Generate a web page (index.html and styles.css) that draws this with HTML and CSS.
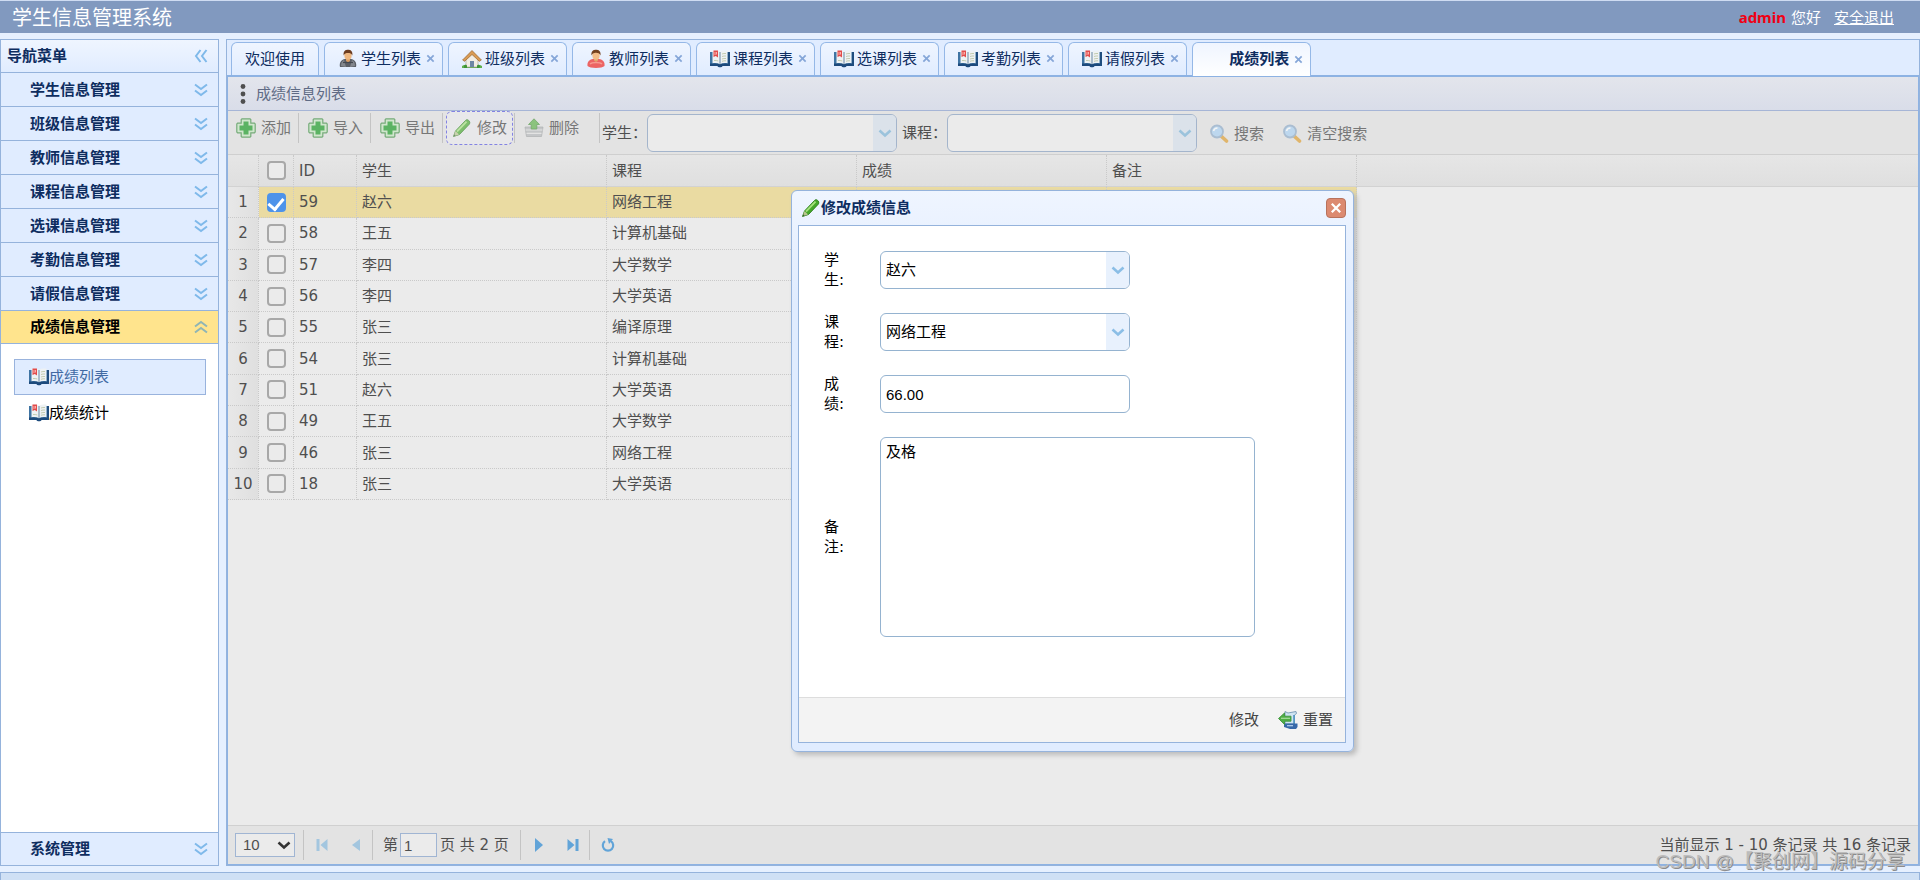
FILE: index.html
```html
<!DOCTYPE html>
<html lang="zh-CN">
<head>
<meta charset="utf-8">
<title>学生信息管理系统</title>
<link rel="stylesheet" href="styles.css">
</head>
<body>
<svg class="sprite" aria-hidden="true">
  <symbol id="i-book" viewBox="0 0 20 20">
    <path d="M0 3h20v13.500h-7.500c-.3 2-4.700 2-5 0H0z" fill="#3f74a3"/>
    <path d="M0 14.500h20v2.500h-7.500c-.3 1.800-4.700 1.800-5 0H0z" fill="#1d4a7c"/>
    <path d="M18 3h2v14h-2z" fill="#1f4d7e"/>
    <path d="M2.500 1.800c3-.6 5.500-.2 7.500 1 2-1.200 4.500-1.600 7.500-1v12.400c-3-.6-5.500-.2-7.500 1-2-1.200-4.500-1.600-7.500-1z" fill="#eef2f4"/>
    <path d="M10 3v12" stroke="#8fa6bb" stroke-width="1.400"/>
    <path d="M12 5c1.300-.5 2.500-.6 4-.5M12 7.500c1.300-.5 2.500-.6 4-.5M12 10c1.300-.5 2.500-.6 4-.5M12 12.300c1.300-.5 2.500-.6 4-.5M4 11.500c1.500-.1 3 0 4.300.5" stroke="#c3ccb0" stroke-width="1" fill="none"/>
    <path d="M3.500 1.500h4.500v7L5.800 7 3.500 8z" fill="#e24b4b"/>
    <path d="M5 3v3M6.500 3v2.500" stroke="#ffc9c4" stroke-width=".8"/>
  </symbol>
  <symbol id="i-student" viewBox="0 0 20 20">
    <path d="M2 18c-1-4 1-7.500 5-8h6c4 .5 6 4 5 8z" fill="#5b5f66"/>
    <path d="M3 17c0-3 1-5 3-6l2 7zM17 17c0-3-1-5-3-6l-2 7z" fill="#83878d"/>
    <path d="M8 9.500h4v2.500l-2 1.500-2-1.500z" fill="#d89a60"/>
    <ellipse cx="10" cy="6.500" rx="3.600" ry="4.300" fill="#eeb780"/>
    <path d="M5.700 6.500C5 2 7.500.8 10 .8s5 1.200 4.300 5.700C13.500 4.500 12 4 10 4s-3.500.5-4.300 2.500z" fill="#6c3d20"/>
    <path d="M5 13.500h10" stroke="#45494f" stroke-width="1.200"/>
  </symbol>
  <symbol id="i-teacher" viewBox="0 0 20 20">
    <path d="M1.500 17c-.5-4 1.500-6.500 5.500-7h6c4 .5 6 3 5.500 7-2 2.500-15 2.500-17 0z" fill="#ec6464"/>
    <path d="M4 15c2-2 10-2 12 0" stroke="#f69a90" stroke-width="1.400" fill="none"/>
    <path d="M8 9.500h4v2l-2 1.500-2-1.500z" fill="#e2a36b"/>
    <ellipse cx="10" cy="6.500" rx="3.600" ry="4.300" fill="#f3bd88"/>
    <path d="M5.500 6.500C4.800 2 7.500.8 10 .8s5.200 1.200 4.500 5.700C13.500 4 11 3.600 8.500 4 7 4.200 6.300 5 5.500 6.500z" fill="#74421f"/>
  </symbol>
  <symbol id="i-house" viewBox="0 0 20 20">
    <path d="M0 17c2-2.500 18-2.500 20 0v2H0z" fill="#5faf4c"/>
    <path d="M4 9l6-6 6 6v9H4z" fill="#f1ede4" stroke="#a9a08f" stroke-width=".6"/>
    <path d="M.6 11L10 1.500 19.400 11l-2 1.300L10 5.500l-7.400 6.800z" fill="#d99b55" stroke="#9a6428" stroke-width=".7"/>
    <path d="M8 18v-6h4v6z" fill="#6d86a5"/>
    <path d="M2 18c0-2.500 2-3 3-1.500V19H2zM15 16.500c1.500-1.500 3-.5 3 1.500l-1 1h-2z" fill="#3f9438"/>
  </symbol>
  <symbol id="i-add" viewBox="0 0 20 20">
    <path d="M6 .8h8l.8.8V5.200h3.600l.8.800v8l-.8.800h-3.600v3.600l-.8.800H6l-.8-.8v-3.600H1.600l-.8-.8V6l.8-.8h3.600V1.600z" fill="#c6e8c2" stroke="#3d8f42" stroke-width="1.200"/>
    <path d="M7.500 3.500h5v4h4v5h-4v4h-5v-4h-4v-5h4z" fill="#149a20"/>
  </symbol>
  <symbol id="i-pencil" viewBox="0 0 20 20">
    <path d="M1.500 18.500L3.500 13 13.500 2.500c1.500-2.400 5.800 1 3.800 3.700L7.500 16.500z" fill="#45a82a" stroke="#287d1a" stroke-width=".9"/>
    <path d="M5 13.500L14.500 3.700" stroke="#a5e07c" stroke-width="1.800"/>
    <path d="M1.500 18.500L3.500 13 7 16.500z" fill="#b9c58f"/>
    <path d="M1.500 18.500l.8-2.300 1.500 1.400z" fill="#345f2d"/>
  </symbol>
  <symbol id="i-remove" viewBox="0 0 20 20">
    <path d="M1 9h18l-1.500 9.500h-15z" fill="#b5b8ba" stroke="#94989a" stroke-width=".7"/>
    <path d="M1.500 12h17M2.500 15.300h15" stroke="#e4e4e4" stroke-width="1.200"/>
    <path d="M10 .8l5.500 5.700h-2.700V11H7.200V6.500H4.500z" fill="#5db347" stroke="#3d8b30" stroke-width=".8"/>
  </symbol>
  <symbol id="i-search" viewBox="0 0 20 20">
    <path d="M12 12l5.500 5" stroke="#df9d2c" stroke-width="3.600" stroke-linecap="round"/>
    <circle cx="8" cy="7.500" r="6" fill="#a9d2f5" stroke="#8caac8" stroke-width="1.800"/>
    <path d="M4.500 7c.5-2 2-3 4-3" stroke="#fff" stroke-width="1.500" fill="none"/>
  </symbol>
  <symbol id="i-reset" viewBox="0 0 20 20">
    <path d="M7 1.500l3 1.500 8-1.500.5 2-2 1.500v9H7z" fill="#cfe4f2" stroke="#7396b3" stroke-width=".9"/>
    <path d="M16 5v9" stroke="#4d94c4" stroke-width="1.600"/>
    <path d="M6 13.500h13.500V17L18 19H12L6 17z" fill="#3768a8"/>
    <path d="M9 15.700h6" stroke="#b7d2ee" stroke-width="1.200"/>
    <path d="M.5 8.500L6.500 3v3.200H13v5H6.500v3.300z" fill="#4fae45" stroke="#3f9440" stroke-width=".9"/>
    <path d="M3 8.300h9" stroke="#a9dca0" stroke-width="1.200"/>
  </symbol>
  <symbol id="i-down2" viewBox="0 0 14 14"><path d="M1 1.500l6 4.500 6-4.500M1 7.500L7 12l6-4.500" fill="none" stroke="currentColor" stroke-width="2"/></symbol>
  <symbol id="i-up2" viewBox="0 0 14 14"><path d="M1 6.500L7 2l6 4.500M1 12.500L7 8l6 4.500" fill="none" stroke="currentColor" stroke-width="2"/></symbol>
  <symbol id="i-left2" viewBox="0 0 14 14"><path d="M6.500 1L2 7l4.500 6M12.500 1L8 7l4.500 6" fill="none" stroke="currentColor" stroke-width="2"/></symbol>
  <symbol id="i-chev" viewBox="0 0 14 14"><path d="M1.500 4.500L7 9.500l5.500-5" fill="none" stroke="currentColor" stroke-width="2.600"/></symbol>
  <symbol id="i-x" viewBox="0 0 10 10"><path d="M1.500 1.500l7 7M8.500 1.500l-7 7" fill="none" stroke="currentColor" stroke-width="1.900"/></symbol>
  <symbol id="i-dots" viewBox="0 0 6 20"><g fill="#4f4f4f"><circle cx="3" cy="2.500" r="2.400"/><circle cx="3" cy="10" r="2.400"/><circle cx="3" cy="17.500" r="2.400"/></g></symbol>
  <symbol id="i-first" viewBox="0 0 14 14"><path d="M1.500 1h3v12h-3zM12.500 1v12l-7-6z" fill="currentColor"/></symbol>
  <symbol id="i-prev" viewBox="0 0 14 14"><path d="M11 1v12L3 7z" fill="currentColor"/></symbol>
  <symbol id="i-next" viewBox="0 0 14 14"><path d="M3 0v14l8-7z" fill="currentColor"/></symbol>
  <symbol id="i-last" viewBox="0 0 14 14"><path d="M9.500 1h3v12h-3zM1.500 1v12l7-6z" fill="currentColor"/></symbol>
  <symbol id="i-refresh" viewBox="0 0 14 14"><path d="M4 3.200a5.200 5.200 0 1 0 6 0" fill="none" stroke="currentColor" stroke-width="2.200"/><path d="M6.500 0L12 1 8 6z" fill="currentColor"/></symbol>
</svg>

<header class="topbar">
  <h1 class="brand">学生信息管理系统</h1>
  <div class="user"><strong class="user-name">admin</strong><span>您好</span><a class="logout" href="#">安全退出</a></div>
</header>

<div class="workspace">
  <nav class="sidebar" aria-label="导航菜单">
    <div class="side-title"><span>导航菜单</span><button class="side-toggle" aria-label="收起"><svg><use href="#i-left2"/></svg></button></div>
    <button class="side-item"><span>学生信息管理</span><svg><use href="#i-down2"/></svg></button>
    <button class="side-item"><span>班级信息管理</span><svg><use href="#i-down2"/></svg></button>
    <button class="side-item"><span>教师信息管理</span><svg><use href="#i-down2"/></svg></button>
    <button class="side-item"><span>课程信息管理</span><svg><use href="#i-down2"/></svg></button>
    <button class="side-item"><span>选课信息管理</span><svg><use href="#i-down2"/></svg></button>
    <button class="side-item"><span>考勤信息管理</span><svg><use href="#i-down2"/></svg></button>
    <button class="side-item"><span>请假信息管理</span><svg><use href="#i-down2"/></svg></button>
    <button class="side-item side-item-open"><span>成绩信息管理</span><svg><use href="#i-up2"/></svg></button>
    <div class="side-panel">
      <a class="side-link side-link-on" href="#"><svg><use href="#i-book"/></svg>成绩列表</a>
      <a class="side-link" href="#"><svg><use href="#i-book"/></svg>成绩统计</a>
    </div>
    <button class="side-item side-item-last"><span>系统管理</span><svg><use href="#i-down2"/></svg></button>
  </nav>

  <main class="main">
    <ul class="tabs">
      <li class="tab tab-home"><a href="#">欢迎使用</a></li>
      <li class="tab"><a href="#"><svg><use href="#i-student"/></svg>学生列表</a><button class="tab-close" aria-label="关闭"><svg><use href="#i-x"/></svg></button></li>
      <li class="tab"><a href="#"><svg><use href="#i-house"/></svg>班级列表</a><button class="tab-close" aria-label="关闭"><svg><use href="#i-x"/></svg></button></li>
      <li class="tab"><a href="#"><svg><use href="#i-teacher"/></svg>教师列表</a><button class="tab-close" aria-label="关闭"><svg><use href="#i-x"/></svg></button></li>
      <li class="tab"><a href="#"><svg><use href="#i-book"/></svg>课程列表</a><button class="tab-close" aria-label="关闭"><svg><use href="#i-x"/></svg></button></li>
      <li class="tab"><a href="#"><svg><use href="#i-book"/></svg>选课列表</a><button class="tab-close" aria-label="关闭"><svg><use href="#i-x"/></svg></button></li>
      <li class="tab"><a href="#"><svg><use href="#i-book"/></svg>考勤列表</a><button class="tab-close" aria-label="关闭"><svg><use href="#i-x"/></svg></button></li>
      <li class="tab"><a href="#"><svg><use href="#i-book"/></svg>请假列表</a><button class="tab-close" aria-label="关闭"><svg><use href="#i-x"/></svg></button></li>
      <li class="tab tab-on"><a href="#"><svg></svg>成绩列表</a><button class="tab-close" aria-label="关闭"><svg><use href="#i-x"/></svg></button></li>
    </ul>

    <section class="panel">
      <h2 class="panel-title"><svg><use href="#i-dots"/></svg>成绩信息列表</h2>
      <div class="toolbar">
        <div class="tools">
          <button class="tool"><svg><use href="#i-add"/></svg>添加</button><i class="sep"></i>
          <button class="tool"><svg><use href="#i-add"/></svg>导入</button><i class="sep"></i>
          <button class="tool"><svg><use href="#i-add"/></svg>导出</button><i class="sep"></i>
          <button class="tool tool-focus"><svg><use href="#i-pencil"/></svg>修改</button><i class="sep"></i>
          <button class="tool"><svg><use href="#i-remove"/></svg>删除</button><i class="sep sep-far"></i>
        </div>
        <div class="filters">
          <label for="f-student">学生：</label>
          <span class="combo"><select id="f-student"><option></option></select><span class="combo-arrow"><svg><use href="#i-chev"/></svg></span></span>
          <label class="second" for="f-course">课程：</label>
          <span class="combo"><select id="f-course"><option></option></select><span class="combo-arrow"><svg><use href="#i-chev"/></svg></span></span>
          <button class="tool find"><svg><use href="#i-search"/></svg>搜索</button>
          <button class="tool find"><svg><use href="#i-search"/></svg>清空搜索</button>
        </div>
      </div>

      <div class="grid-area">
        <table class="grid">
          <colgroup><col class="c-num"><col class="c-check"><col class="c-id"><col class="c-wide"><col class="c-wide"><col class="c-wide"><col class="c-wide"><col></colgroup>
          <thead>
            <tr><th></th><th class="check"><input type="checkbox" aria-label="全选"></th><th>ID</th><th>学生</th><th>课程</th><th>成绩</th><th>备注</th><th></th></tr>
          </thead>
          <tbody>
            <tr class="row-on"><td class="num">1</td><td class="check"><input type="checkbox" checked aria-label="选择 59"></td><td>59</td><td>赵六</td><td>网络工程</td><td></td><td></td><td class="rest"></td></tr>
            <tr><td class="num">2</td><td class="check"><input type="checkbox" aria-label="选择 58"></td><td>58</td><td>王五</td><td>计算机基础</td><td></td><td></td><td class="rest"></td></tr>
            <tr><td class="num">3</td><td class="check"><input type="checkbox" aria-label="选择 57"></td><td>57</td><td>李四</td><td>大学数学</td><td></td><td></td><td class="rest"></td></tr>
            <tr><td class="num">4</td><td class="check"><input type="checkbox" aria-label="选择 56"></td><td>56</td><td>李四</td><td>大学英语</td><td></td><td></td><td class="rest"></td></tr>
            <tr><td class="num">5</td><td class="check"><input type="checkbox" aria-label="选择 55"></td><td>55</td><td>张三</td><td>编译原理</td><td></td><td></td><td class="rest"></td></tr>
            <tr><td class="num">6</td><td class="check"><input type="checkbox" aria-label="选择 54"></td><td>54</td><td>张三</td><td>计算机基础</td><td></td><td></td><td class="rest"></td></tr>
            <tr><td class="num">7</td><td class="check"><input type="checkbox" aria-label="选择 51"></td><td>51</td><td>赵六</td><td>大学英语</td><td></td><td></td><td class="rest"></td></tr>
            <tr><td class="num">8</td><td class="check"><input type="checkbox" aria-label="选择 49"></td><td>49</td><td>王五</td><td>大学数学</td><td></td><td></td><td class="rest"></td></tr>
            <tr><td class="num">9</td><td class="check"><input type="checkbox" aria-label="选择 46"></td><td>46</td><td>张三</td><td>网络工程</td><td></td><td></td><td class="rest"></td></tr>
            <tr><td class="num">10</td><td class="check"><input type="checkbox" aria-label="选择 18"></td><td>18</td><td>张三</td><td>大学英语</td><td></td><td></td><td class="rest"></td></tr>
          </tbody>
        </table>
      </div>

      <footer class="pager">
        <span class="page-size"><select aria-label="每页条数"><option>10</option></select><svg><use href="#i-chev"/></svg></span>
        <i class="sep"></i>
        <button class="page-btn faded" aria-label="第一页"><svg><use href="#i-first"/></svg></button>
        <button class="page-btn faded" aria-label="上一页"><svg><use href="#i-prev"/></svg></button>
        <i class="sep"></i>
        <label class="page-label" for="page-no">第</label><input class="page-no" id="page-no" value="1"><span class="page-count">页 共 2 页</span>
        <i class="sep"></i>
        <button class="page-btn" aria-label="下一页"><svg><use href="#i-next"/></svg></button>
        <button class="page-btn" aria-label="最后一页"><svg><use href="#i-last"/></svg></button>
        <i class="sep"></i>
        <button class="page-btn" aria-label="刷新"><svg><use href="#i-refresh"/></svg></button>
        <span class="page-info">当前显示 1 - 10 条记录 共 16 条记录</span>
      </footer>
    </section>
  </main>
</div>
<div class="bottombar"></div>

<form class="dialog" role="dialog" aria-labelledby="dlg-title">
  <div class="dialog-head">
    <svg><use href="#i-pencil"/></svg><h2 id="dlg-title">修改成绩信息</h2>
    <button type="button" class="dialog-close" aria-label="关闭"><svg><use href="#i-x"/></svg></button>
  </div>
  <div class="dialog-body">
    <div class="fields">
      <label for="d-student">学生:</label>
      <span class="combo"><select id="d-student"><option>赵六</option></select><span class="combo-arrow"><svg><use href="#i-chev"/></svg></span></span>
      <label for="d-course">课程:</label>
      <span class="combo"><select id="d-course"><option>网络工程</option></select><span class="combo-arrow"><svg><use href="#i-chev"/></svg></span></span>
      <label for="d-score">成绩:</label>
      <input class="text" id="d-score" value="66.00">
      <label for="d-remark">备注:</label>
      <textarea class="text remark" id="d-remark">及格</textarea>
    </div>
    <div class="dialog-buttons">
      <button type="button" class="tool">修改</button>
      <button type="button" class="tool"><svg><use href="#i-reset"/></svg>重置</button>
    </div>
  </div>
</form>
<div class="watermark">CSDN @【聚创网】源码分享</div>
</body>
</html>
```

FILE: styles.css
```css
* { box-sizing: border-box; }

body {
  margin: 0;
  min-height: 100vh;
  display: flex;
  flex-direction: column;
  position: relative;
  background: #e6f0ff;
  color: #000;
  font: 15px/20px "DejaVu Sans", "Noto Sans CJK SC", sans-serif;
}

button, select, input, textarea { font: inherit; color: inherit; margin: 0; }
button { border: 0; padding: 0; background: none; }
h1, h2, ul { margin: 0; padding: 0; font-size: inherit; }
svg { flex: none; display: block; width: 20px; height: 20px; }
.sprite { display: none; }
a { color: inherit; text-decoration: none; }

/* top bar */
.topbar {
  display: flex;
  align-items: center;
  justify-content: space-between;
  height: 33px;
  padding: 0 26px 0 12px;
  border-top: 1px solid #cfdcf2;
  background: #8199bf;
  color: #fff;
}
.brand { font: 20px/28px "Noto Sans CJK SC", sans-serif; }
.user { display: flex; font-family: "Noto Sans", "Noto Sans CJK SC", sans-serif; }
.user-name { color: #f00014; margin-right: 5px; }
.logout { margin-left: 13px; text-decoration: underline; }

.workspace { flex: 1; display: flex; gap: 7px; padding: 6px 0; }

/* sidebar */
.sidebar {
  flex: none;
  width: 219px;
  display: flex;
  flex-direction: column;
  border: 1px solid #95b3dc;
  background: #fff;
  color: #0e2d5f;
  font-weight: bold;
}
.side-title, .side-item {
  display: flex;
  align-items: center;
  justify-content: space-between;
  height: 34px;
  padding: 0 10px 0 29px;
  border-bottom: 1px solid #95b3dc;
  background: #e0ecff;
  text-align: left;
}
.side-title { height: 33px; padding-left: 6px; background: linear-gradient(#eff5ff, #e0ecff); }
.side-title svg, .side-item svg { width: 14px; height: 14px; color: #7fb9ea; }
.side-item-open { height: 33px; background: #ffe48d; color: #000; }
.side-item-open svg { color: #8fb5b5; }
.side-item-last { height: 33px; border-top: 1px solid #95b3dc; border-bottom: 0; }
.side-panel { flex: 1; padding: 15px 12px 0 13px; font-weight: normal; }
.side-link {
  display: flex;
  align-items: center;
  height: 36px;
  padding-left: 14px;
  border: 1px solid transparent;
  color: #000;
}
.side-link-on { border-color: #99b3dd; background: #e0ecff; color: #416aa3; }

/* main area and tabs */
.main {
  flex: 1;
  min-width: 0;
  display: flex;
  flex-direction: column;
  border: 1px solid #95b3dc;
  background: #e0ecff;
}
.tabs {
  display: flex;
  gap: 5px;
  padding: 2px 4px 0;
  border-bottom: 1px solid #8db2e3;
  list-style: none;
  color: #0e2d5f;
}
.tab {
  display: flex;
  align-items: center;
  gap: 5px;
  height: 33px;
  padding: 5px 7px 6px 13px;
  border: 1px solid #95b8e7;
  border-bottom: 0;
  border-radius: 6px 6px 0 0;
  background: linear-gradient(#eff5ff, #e0ecff);
}
.tab a { display: flex; align-items: center; gap: 3px; }
.tab-home { padding: 5px 13px 6px; }
.tab-on { margin-bottom: -1px; height: 34px; background: linear-gradient(#eff5ff, #fff); font-weight: bold; }
.tab-close svg { width: 9px; height: 9px; color: #85a6d8; }

.panel {
  flex: 1;
  display: flex;
  flex-direction: column;
  border: 1px solid #8db2e3;
  background: #ebebeb;
  color: #4f4f4f;
}
.panel-title {
  display: flex;
  align-items: center;
  gap: 10px;
  height: 34px;
  padding: 0 12px;
  border-bottom: 1px solid #a6b5d6;
  background: linear-gradient(#e3e5ec, #d9dde9);
  color: #5f6b85;
  font-weight: normal;
}
.panel-title svg { width: 6px; }

.toolbar { display: flex; align-items: flex-start; height: 44px; border-bottom: 1px solid #cfcfcf; background: #e3e3e3; }
.tools { display: flex; align-items: center; height: 34px; padding-left: 2px; }
.tool {
  display: flex;
  align-items: center;
  gap: 5px;
  height: 34px;
  padding: 0 5px;
  border: 1px solid transparent;
  border-radius: 6px;
  color: #777;
}
.tool svg { opacity: .65; }
.tools .tool { margin-right: 1px; }
.tools .sep { margin-right: 3px; }
.tools .sep-far { margin-left: 13px; margin-right: 2px; }
.tools .tool-focus { border: 1px dashed #8383e2; background: #e8e8ea; }
.sep { width: 1px; height: 30px; background: #c4c4c4; }
.filters { display: flex; align-items: center; height: 44px; }
.second { margin-left: 5px; }
.find { margin: 2px 0 0 6px; }

/* drop-down: the arrow cell shares the select's grid cell */
.combo { display: inline-grid; width: 250px; height: 38px; }
.combo select, .combo-arrow { grid-area: 1 / 1; }
.combo select {
  appearance: none;
  width: 100%;
  padding: 0 5px;
  border: 1px solid #95b3d0;
  border-radius: 6px;
  background: #fff;
  font-family: "Liberation Sans", "Noto Sans CJK SC", sans-serif;
}
.combo-arrow {
  justify-self: end;
  display: flex;
  align-items: center;
  justify-content: center;
  width: 23px;
  margin: 1px;
  border-radius: 0 5px 5px 0;
  background: #e8f1fd;
  color: #8bbee6;
  pointer-events: none;
}
.combo-arrow svg { width: 14px; height: 14px; }
.filters .combo select { background: #ebebeb; border-color: #a4b5cc; }
.filters .combo-arrow { background: #dbe2ea; color: #9bc3dc; }

/* data grid */
.grid-area { flex: 1; }
.grid { width: 100%; height: 345px; table-layout: fixed; border-collapse: separate; border-spacing: 0; }
.c-num { width: 31px; }
.c-check { width: 35px; }
.c-id { width: 63px; }
.c-wide { width: 250px; }
.grid th, .grid td {
  height: 31px;
  padding: 0 5px;
  border-right: 1px dotted #c9c9c9;
  border-bottom: 1px dotted #c9c9c9;
  text-align: left;
  font-weight: normal;
  line-height: 20px;
}
.grid th { height: 32px; background: linear-gradient(#e6e6e6, #dfdfdf); border-bottom-style: solid; border-bottom-color: #d2d2d2; }
.grid th:last-child, .grid .rest { border-right: 0; }
.grid .rest { border-bottom: 0; background: #ebebeb; }
.grid .num { padding: 0; text-align: center; background: linear-gradient(90deg, #e8e8e8, #dfdfdf); }
.grid .check { padding: 0; text-align: center; }
.grid .row-on td:not(.num):not(.rest) { background: #eadba2; }
.check input {
  appearance: none;
  display: block;
  width: 19px;
  height: 19px;
  margin: 0 auto;
  border: 2px solid #a8a8a8;
  border-radius: 4px;
  background: #ebebeb;
}
.check input:checked { border-color: #4d93ea; background: #4d93ea; }
.check input:checked::before {
  content: "";
  display: block;
  width: 7px;
  height: 12px;
  margin: 0 auto;
  border: solid #fff;
  border-width: 0 3px 3px 0;
  transform: rotate(40deg);
}

/* pager */
.pager { display: flex; align-items: center; height: 39px; padding: 0 7px; border-top: 1px solid #d0d0d0; background: #e3e3e3; }
.page-size { display: inline-grid; width: 60px; margin-right: 8px; align-items: center; }
.page-size select, .page-size svg { grid-area: 1 / 1; }
.page-size select { appearance: none; height: 24px; padding: 0 7px; border: 1px solid #a0b5d3; background: #ebebeb; }
.page-size svg { justify-self: end; width: 14px; height: 14px; margin-right: 4px; color: #333; pointer-events: none; }
.page-btn { padding: 9px 9px 9px 11px; color: #62a4d8; }
.page-btn svg { width: 14px; height: 14px; }
.faded { color: #a3c6df; }
.page-label { margin: 0 2px 0 10px; }
.page-no { width: 37px; height: 24px; padding: 0 3px; border: 1px solid #a0b5d3; background: #ebebeb; }
.page-size select, .page-no { font-family: "Liberation Sans", sans-serif; }
.page-count { margin: 0 11px 0 3px; }
.page-info { margin-left: auto; }

.bottombar { height: 8px; border: 1px solid #95b3dc; border-bottom: 0; background: #cfe0f5; }

/* edit dialog */
.dialog {
  position: absolute;
  left: 791px;
  top: 190px;
  width: 563px;
  padding: 0 7px 8px 6px;
  border: 1px solid #95b3dc;
  border-radius: 6px;
  background: linear-gradient(#eff5ff, #e0ecff 20%);
  box-shadow: 3px 3px 5px #bbb;
}
.dialog-head { display: flex; align-items: center; height: 34px; padding-left: 3px; color: #0e2d5f; }
.dialog-close {
  display: flex;
  align-items: center;
  justify-content: center;
  width: 20px;
  height: 20px;
  margin-left: auto;
  border: 1px solid #b8725c;
  border-radius: 4px;
  background: #dc8a70;
  color: #fff;
}
.dialog-close svg { width: 12px; height: 12px; }
.dialog-body { border: 1px solid #95b3dc; background: #fff; }
.fields {
  display: grid;
  grid-template-columns: 24px 1fr;
  column-gap: 32px;
  row-gap: 24px;
  align-items: center;
  padding: 25px 25px 60px;
  line-height: 20px;
}
.fields > label { margin: -2px 0; word-break: break-all; }
.text {
  width: 250px;
  height: 38px;
  padding: 0 5px;
  border: 1px solid #95b3d0;
  border-radius: 6px;
  background: #fff;
  font-family: "Liberation Sans", "Noto Sans CJK SC", sans-serif;
}
.remark { display: block; width: 375px; height: 200px; padding: 4px 5px; resize: none; }
.dialog-buttons {
  display: flex;
  justify-content: flex-end;
  gap: 7px;
  padding: 5px 6px;
  border-top: 1px solid #ddd;
  background: #f3f3f3;
}
.dialog-buttons .tool { color: #444; }
.dialog-buttons .tool svg { opacity: 1; }

.watermark {
  position: absolute;
  right: 15px;
  bottom: 6px;
  color: #bcbcbc;
  font: 19px/24px "Liberation Sans", "Noto Sans CJK SC", sans-serif;
  text-shadow: 1px 1px 0 #8c8c8c;
}
```
